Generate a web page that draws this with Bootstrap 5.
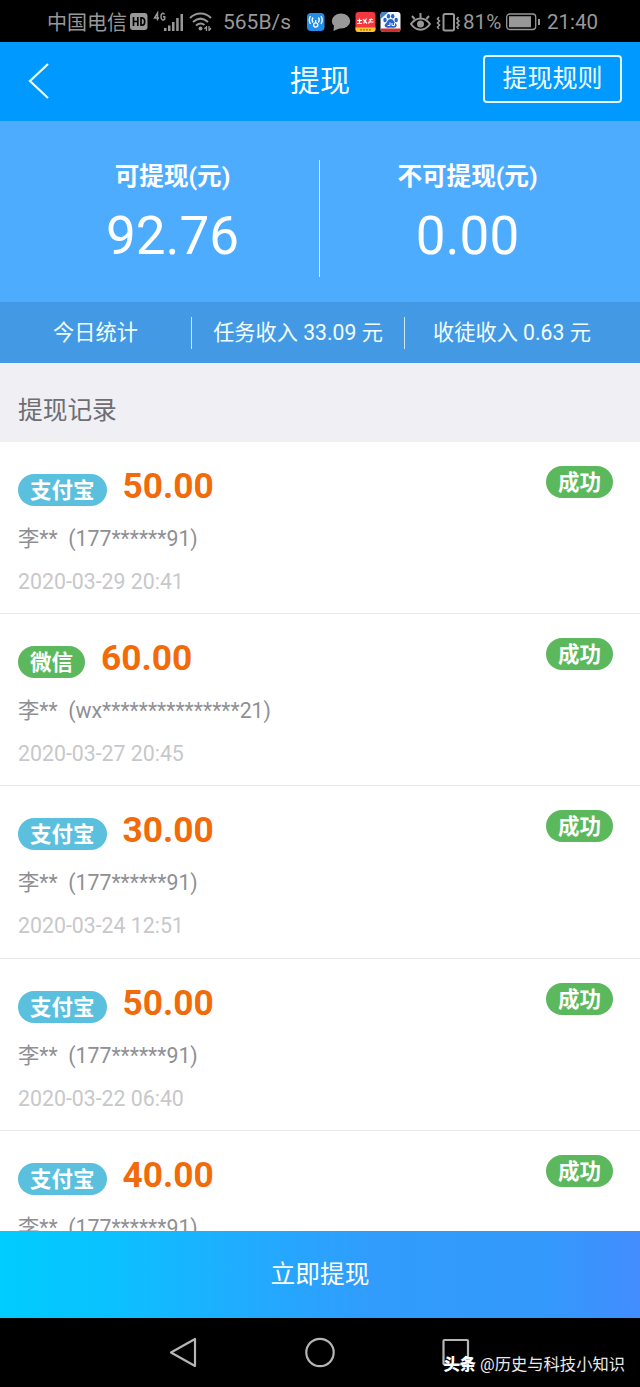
<!DOCTYPE html>
<html lang="zh-CN">
<head>
<meta charset="utf-8">
<meta name="viewport" content="width=device-width, initial-scale=1">
<title>提现</title>
<link href="https://cdn.jsdelivr.net/npm/bootstrap@5.3.0/dist/css/bootstrap.min.css" rel="stylesheet">
<style>
body{font-family:Roboto,"Noto Sans CJK SC",sans-serif;background:#fff}
.screen{width:640px;height:1387px}
.screen>*{flex:none}
.statusbar{height:42px;background:#000;color:#989898;font-size:20px;line-height:42px;padding-left:47px;padding-top:1px}
.statusbar svg{flex:none}
.topbar{height:79px;background:#0099ff;color:#fff;display:grid;grid-template-columns:180px 1fr 180px;align-items:center;padding-bottom:2px}
.topbar h1{font-size:30px;line-height:40px;font-weight:400}
.rules-btn{width:139px;height:48px;border:2px solid #e4f7ff;border-radius:4px;color:#f2ffff;font-size:25px;line-height:38px;margin:0 18px 4px auto}
.balance{height:181px;background:#4eacff;color:#fff;padding-top:39px}
.balance-half{width:50%;height:117px}
.balance-half:first-child{border-right:1px solid #cdeaff;padding-left:26px}
.balance-half:last-child{padding-right:25px}
.balance-label{font-size:24.6px;font-weight:700;line-height:34px}
.balance-value{font-size:53px;line-height:64px;margin-top:10px}
.today{height:61px;background:#4499e4;color:#f1ffff;font-size:21.2px}
.today span{height:32px;line-height:31px}
.today span+span{border-left:1px solid #cce8fa}
.section-title{height:78.6px;background:#efeff4;color:#6d6d72;font-size:24.7px;line-height:95px;padding-left:18px}
.records{height:789.4px}
.record{height:172.4px;border-bottom:1px solid #e9e9eb;padding:24px 27px 0 18px;flex:none}
.pill{height:32px;line-height:33px;border-radius:16px;padding:0 12px;font-size:21.5px;font-weight:700;color:#fff}
.pay-alipay{background:#5bc0de}
.pay-wechat,.done{background:#5cb85c}
.amount{font-size:35.3px;line-height:40px;font-weight:700;color:#f26b0b;margin-left:16px}
.account{font-size:21.3px;line-height:28px;color:#8f8f94;margin-top:19px;white-space:pre}
.stamp{font-size:21.3px;line-height:28px;color:#c8c8ca;margin-top:15px}
.submit{height:87px;border:0;border-radius:0;color:#fff;font-size:24.7px;background:linear-gradient(90deg,#00ccff 0%,#09c3ff 15%,#20acff 38%,#319cfc 58%,#3399fb 85%,#438dff 100%)}
.androidbar{height:69px;background:#000}
.credit{right:15px;bottom:10px;color:#e9e9e9;font-size:16.3px;line-height:24px;white-space:nowrap}
.credit b{font-weight:900;color:#fff}
</style>
</head>
<body>
<div class="screen d-flex flex-column overflow-hidden">
  <div class="statusbar d-flex align-items-center">
    <span style="width:83px;padding-top:2px">中国电信</span>
    <svg width="18" height="18" viewBox="0 0 18 18"><rect width="17.5" height="17" rx="3" fill="#989898"/><path d="M3.500 4v9M7.800 4v9M3.500 8.500h4M11 4.800v7.400h1c3.600 0 3.600-7.400 0-7.400z" fill="none" stroke="#000" stroke-width="1.7"/></svg>
    <svg class="ms-1" width="32" height="22" viewBox="0 0 32 22"><g fill="none" stroke="#989898" stroke-width="1.500"><path d="M5.500 9.500V2L2.500 7h4.500M12.500 3.500C11.500 1.500 9 2 9 5.500s2.500 4.500 3.700 2.500V5.800H11"/></g><path d="M12 17h2.500v3H12zM16 14.500h2.500V20H16zM20 11h2.500v9H20zM24.200 7h2.500v13h-2.500zM28.500 3H31v17h-2.500z" fill="#989898"/></svg>
    <svg style="margin-left:5px" width="24" height="22" viewBox="0 0 24 22"><g fill="none" stroke="#989898" stroke-width="2"><path d="M1 7C7 1 16 1 22 7M4 11c5-4.500 10-4.500 15 0M7 14.500c3-2.500 6-2.500 8.500-.5"/></g><circle cx="11.500" cy="17.500" r="2" fill="#989898"/><path d="M17.500 15v5M20 15v5M15.500 18l2-2.500M22 17l-2 2.500" stroke="#989898" stroke-width="1.300"/></svg>
    <span style="width:83px;margin-left:10px;font-size:21px">565B/s</span>
    <svg width="95" height="22" viewBox="0 0 95 22">
      <rect x="1" y="2" width="17.500" height="18" rx="4" fill="#238de8"/>
      <g fill="none" stroke="#fff" stroke-width="1.300"><circle cx="9.700" cy="14" r="2.100"/><path d="M9.700 12V9M7 6.500q-1.800 2.500 0 5M12.400 6.500q1.800 2.500 0 5M4.500 5q-2.500 4 0 8M15 5q2.500 4 0 8"/></g>
      <ellipse cx="35" cy="10" rx="9.200" ry="7.500" fill="#989898"/><path d="M28 14l-.5 6 7-3z" fill="#989898"/>
      <rect x="49.500" y="1" width="20" height="20" rx="3" fill="#f23940"/><path d="M49.500 16.500h20V18q0 3-3 3h-14q-3 0-3-3z" fill="#ffc629"/><path d="M51 9.500h5M53.500 7.500v5M51 12.500h5M57 8l4 4.500M60.500 7.500l-3 5M63 8.500h4M65.500 7.500l-3 5M62.500 11h5" stroke="#fff" stroke-width="1.200"/><path d="M54 18.800h11" stroke="#b66a16" stroke-width="1.200" stroke-dasharray="2 1"/>
      <rect x="74.500" y="1" width="20" height="20" rx="3" fill="#f4f8ff"/><path d="M77.500 1h5l-8 7V4q0-3 3-3z" fill="#3d86cd"/><path d="M74.500 17.500h20v.5q0 3-3 3h-14q-3 0-3-3z" fill="#cb302d"/><g fill="#2862c6"><ellipse cx="79" cy="9" rx="1.700" ry="2.200"/><ellipse cx="82.500" cy="5.200" rx="1.700" ry="2.300"/><ellipse cx="86.700" cy="5.200" rx="1.700" ry="2.300"/><ellipse cx="90.200" cy="9" rx="1.700" ry="2.200"/><path d="M84.700 8c3 0 3 3 5 4.500 3 3-1 5-5 4-4 1-8-1-5-4 2-1.500 2-4.500 5-4.500z"/></g><path d="M81.500 14.500H84v-3M86 12v2.500h2.500V12" fill="none" stroke="#fff"/>
    </svg>
    <svg style="margin-left:9px" width="52" height="22" viewBox="0 0 52 22"><g fill="none" stroke="#989898" stroke-width="2"><path d="M1 13c5-7.500 14-7.500 19 0-5 7.500-14 7.500-19 0z"/><circle cx="10.500" cy="13" r="2.500" fill="#989898"/><path d="M2 5l2.500 3M10.500 2v5M19 5l-2.500 3"/><rect x="33.500" y="3" width="10.500" height="16.500" rx="1.500"/><path d="M29 6l-1.500 2 2 2-2 2 2 2-2 2 1.500 2M48.500 6L47 8l2 2-2 2 2 2-2 2 1.500 2" stroke-width="1.600"/></g></svg>
    <span style="width:42px;margin-left:1px;font-size:20.600px">81%</span>
    <svg width="36" height="18" viewBox="0 0 36 18"><rect x="1.700" y="1" width="29" height="15.500" rx="3" fill="none" stroke="#989898" stroke-width="1.300"/><path d="M4 3.200h22v11H4zM33 6h2v6h-2z" fill="#989898"/></svg>
    <span style="margin-left:6px;font-size:20.500px">21:40</span>
  </div>

  <header class="topbar">
    <svg style="margin-left:28px" width="22" height="38" viewBox="0 0 22 38"><path d="M20 2L2 19l18 17" fill="none" stroke="#edffff" stroke-width="2.200"/></svg>
    <h1 class="m-0 text-center">提现</h1>
    <button class="rules-btn btn p-0">提现规则</button>
  </header>

  <section class="balance d-flex text-center">
    <div class="balance-half"><div class="balance-label">可提现(元)</div><div class="balance-value">92.76</div></div>
    <div class="balance-half"><div class="balance-label">不可提现(元)</div><div class="balance-value">0.00</div></div>
  </section>
  <section class="today d-flex align-items-center text-center">
    <span style="width:191px">今日统计</span><span style="width:213px">任务收入 33.09 元</span><span class="flex-grow-1" style="padding-right:21px">收徒收入 0.63 元</span>
  </section>
  <h2 class="section-title m-0 fw-normal">提现记录</h2>

  <main class="records d-flex flex-column overflow-hidden">
    <article class="record">
      <div class="d-flex align-items-start"><span class="pill pay-alipay mt-2">支付宝</span><span class="amount">50.00</span><span class="pill done ms-auto">成功</span></div>
      <div class="account">李**  (177******91)</div><div class="stamp">2020-03-29 20:41</div>
    </article>
    <article class="record">
      <div class="d-flex align-items-start"><span class="pill pay-wechat mt-2">微信</span><span class="amount">60.00</span><span class="pill done ms-auto">成功</span></div>
      <div class="account">李**  (wx***************21)</div><div class="stamp">2020-03-27 20:45</div>
    </article>
    <article class="record">
      <div class="d-flex align-items-start"><span class="pill pay-alipay mt-2">支付宝</span><span class="amount">30.00</span><span class="pill done ms-auto">成功</span></div>
      <div class="account">李**  (177******91)</div><div class="stamp">2020-03-24 12:51</div>
    </article>
    <article class="record">
      <div class="d-flex align-items-start"><span class="pill pay-alipay mt-2">支付宝</span><span class="amount">50.00</span><span class="pill done ms-auto">成功</span></div>
      <div class="account">李**  (177******91)</div><div class="stamp">2020-03-22 06:40</div>
    </article>
    <article class="record">
      <div class="d-flex align-items-start"><span class="pill pay-alipay mt-2">支付宝</span><span class="amount">40.00</span><span class="pill done ms-auto">成功</span></div>
      <div class="account">李**  (177******91)</div>
    </article>
  </main>
  <button class="submit btn w-100 p-0">立即提现</button>
  <footer class="androidbar position-relative">
    <svg class="d-block" width="640" height="69" viewBox="0 0 640 69" fill="none" stroke="#b5b5b5" stroke-width="2.200" stroke-linejoin="round"><path d="M195 21v27L171 34.500z"/><circle cx="320" cy="34.500" r="13.700"/><rect x="443.500" y="22" width="24.500" height="24.500" rx="1"/></svg>
    <div class="credit position-absolute"><b>头条</b> @历史与科技小知识</div>
  </footer>
</div>
<script src="https://cdn.jsdelivr.net/npm/bootstrap@5.3.0/dist/js/bootstrap.bundle.min.js"></script>
</body>
</html>
